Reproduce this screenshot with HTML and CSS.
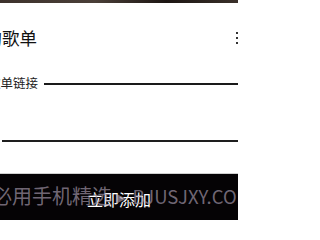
FILE: index.html
```html
<!DOCTYPE html>
<html lang="zh">
<head>
<meta charset="utf-8">
<link rel="stylesheet" href="styles.css">
</head>
<body>
<div class="sheet">
  <div class="topbar"></div>
  <div class="header">
    <div class="title">的歌单</div>
    <div class="edge"><span></span><span></span><span></span></div>
  </div>
  <div class="field">
    <span class="label">歌单链接</span>
    <span class="rule"></span>
  </div>
  <div class="input"></div>
  <div class="footer">
    <span class="btn">立即添加</span>
    <span class="watermark">必用手机精选 ▸<span class="wm-latin">BJUSJXY.COM</span></span>
  </div>
</div>
</body>
</html>
```
FILE: styles.css
```css
html, body {
  margin: 0;
  padding: 0;
  background: #fff;
}
body {
  width: 238px;
  height: 220px;
  overflow: hidden;
  font-family: "Noto Sans CJK SC", "Noto Sans", sans-serif;
}
.sheet {
  display: flex;
  flex-direction: column;
  height: 220px;
}
.topbar {
  height: 3px;
  flex: none;
  background: linear-gradient(90deg, #3d322c 0%, #4a3f38 40%, #1c1512 70%, #3a302a 100%);
}
.header {
  display: flex;
  justify-content: space-between;
  align-items: flex-start;
  margin-top: 26px;
  height: 17px;
  flex: none;
}
.title {
  font-size: 17.5px;
  line-height: 17px;
  color: #111;
  margin-left: -15.5px;
  white-space: nowrap;
}
.edge {
  display: flex;
  flex-direction: column;
  gap: 3px;
  padding-top: 3px;
  width: 2px;
}
.edge span {
  display: block;
  width: 2px;
  height: 2px;
  background: #333;
}
.field {
  display: flex;
  align-items: center;
  margin-top: 30px;
  height: 14px;
  flex: none;
}
.label {
  font-size: 12.5px;
  line-height: 14px;
  color: #222;
  margin-left: -12px;
  white-space: nowrap;
}
.rule {
  flex: 1;
  height: 2px;
  background: #1a1a1a;
  margin-left: 6px;
  margin-top: 2px;
}
.input {
  margin-top: 50px;
  margin-left: 2px;
  height: 2px;
  flex: none;
  background: #1e1e1e;
}
.footer {
  position: relative;
  margin-top: 31px;
  flex: 1;
  background: #050305;
  border-top: 1px solid #d0d0d0;
  display: flex;
  justify-content: center;
  padding-top: 17px;
  overflow: hidden;
}
.btn {
  position: relative;
  z-index: 1;
  font-size: 16px;
  line-height: 16px;
  height: 16px;
  color: #fff;
}
.watermark {
  position: absolute;
  left: -8px;
  top: 10px;
  font-size: 20px;
  line-height: 24px;
  color: rgba(160, 148, 165, 0.7);
  white-space: nowrap;
  z-index: 2;
}
.wm-latin {
  font-size: 18.5px;
  margin-left: 6px;
}
```
